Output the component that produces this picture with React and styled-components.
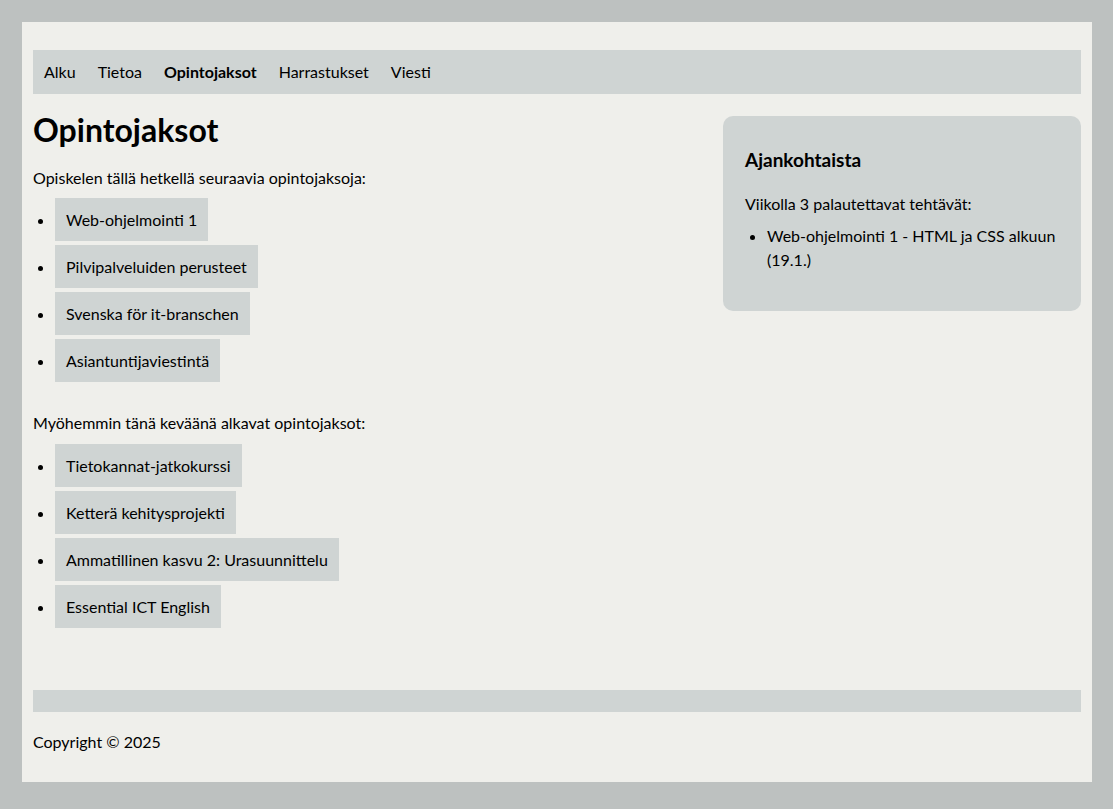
import React from "react";
import styled, { createGlobalStyle } from "styled-components";

const Global = createGlobalStyle`
  html, body { margin: 0; padding: 0; }
  body {
    background: #bdc1c0;
    font-family: Lato, "Open Sans", sans-serif;
    font-size: 16px;
    color: #000;
    padding: 22px 21px 27px 22px;
  }
`;

const Page = styled.div`
  background: #efefeb;
  box-sizing: border-box;
  height: 760px;
  padding: 28px 11px;
  display: flex;
  flex-direction: column;
`;

const Nav = styled.nav`
  background: #cfd4d3;
  height: 44px;
  display: flex;
  align-items: center;
`;

const NavItem = styled.a`
  padding: 0 11px;
  line-height: 44px;
  color: #000;
  text-decoration: none;
  font-weight: ${(p) => (p.$active ? 700 : 400)};
`;

const Main = styled.div`
  flex: 1;
  display: grid;
  grid-template-columns: 1fr 358px;
  column-gap: 22px;
  align-items: start;
`;

const Content = styled.main``;

const Title = styled.h1`
  font-size: 32px;
  line-height: 40px;
  margin: 16px 0 0;
  font-weight: 700;
`;

const Para = styled.p`
  margin: ${(p) => p.$mt || 0}px 0 0;
  line-height: 24px;
`;

const CourseList = styled.ul`
  margin: ${(p) => p.$mt || 8}px 0 0;
  padding-left: 22px;
`;

const Course = styled.li`
  width: fit-content;
  background: #cfd4d3;
  padding: 11px;
  line-height: 21px;
  margin-bottom: 4px;
`;

const Aside = styled.aside`
  margin-top: 22px;
  background: #cfd4d3;
  border-radius: 10px;
  padding: 22px 22px 39px;
`;

const AsideTitle = styled.h2`
  font-size: 19px;
  line-height: 24px;
  margin: 10px 0 0;
  font-weight: 700;
`;

const NewsList = styled.ul`
  margin: 8px 0 0;
  padding-left: 22px;
  line-height: 24px;
`;

const Footer = styled.footer``;

const FooterBar = styled.div`
  background: #cfd4d3;
  height: 22px;
`;

const Copy = styled.p`
  margin: 18px 0 0;
  line-height: 24px;
`;

const now = [
  "Web-ohjelmointi 1",
  "Pilvipalveluiden perusteet",
  "Svenska för it-branschen",
  "Asiantuntijaviestintä",
];
const later = [
  "Tietokannat-jatkokurssi",
  "Ketterä kehitysprojekti",
  "Ammatillinen kasvu 2: Urasuunnittelu",
  "Essential ICT English",
];

export default function App() {
  return (
    <>
      <Global />
      <Page>
        <Nav>
          <NavItem href="#">Alku</NavItem>
          <NavItem href="#">Tietoa</NavItem>
          <NavItem href="#" $active>Opintojaksot</NavItem>
          <NavItem href="#">Harrastukset</NavItem>
          <NavItem href="#">Viesti</NavItem>
        </Nav>
        <Main>
          <Content>
            <Title>Opintojaksot</Title>
            <Para $mt={16}>Opiskelen tällä hetkellä seuraavia opintojaksoja:</Para>
            <CourseList $mt={8}>
              {now.map((c) => (
                <Course key={c}>{c}</Course>
              ))}
            </CourseList>
            <Para $mt={29}>Myöhemmin tänä keväänä alkavat opintojaksot:</Para>
            <CourseList $mt={9}>
              {later.map((c) => (
                <Course key={c}>{c}</Course>
              ))}
            </CourseList>
          </Content>
          <Aside>
            <AsideTitle>Ajankohtaista</AsideTitle>
            <Para $mt={20}>Viikolla 3 palautettavat tehtävät:</Para>
            <NewsList>
              <li>Web-ohjelmointi 1 - HTML ja CSS alkuun (19.1.)</li>
            </NewsList>
          </Aside>
        </Main>
        <Footer>
          <FooterBar />
          <Copy>Copyright © 2025</Copy>
        </Footer>
      </Page>
    </>
  );
}
